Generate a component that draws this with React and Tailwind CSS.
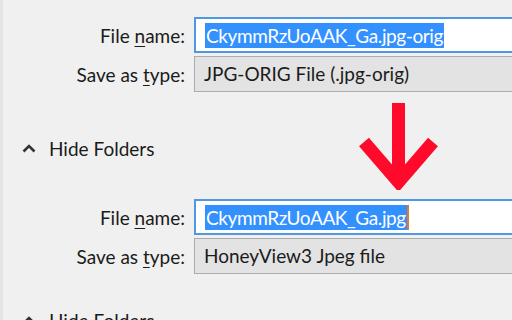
export default function App() {
  const font = { fontFamily: 'Lato, "Open Sans", sans-serif' };
  const Row = ({ label, children, boxClass }) => (
    <div className="flex items-center h-[36px]">
      <div className="w-[186px] shrink-0 text-right pr-[1px] text-[19px] text-[#1b1b1b] leading-none">
        {label}
      </div>
      <div className={"ml-[8px] flex-1 h-full flex items-center pl-[9px] " + boxClass}>{children}</div>
    </div>
  );
  const NameLabel = () => (
    <span>File <span className="underline underline-offset-[3px] decoration-1">n</span>ame:</span>
  );
  const TypeLabel = () => (
    <span>Save as <span className="underline underline-offset-[3px] decoration-1">t</span>ype:</span>
  );
  const Selected = ({ text }) => (
    <span className="bg-[#3390ff] text-white text-[19px] leading-[25px] px-[1px] tracking-[-0.4px]">{text}</span>
  );
  const HideFolders = () => (
    <div className="flex items-center h-[30px] pl-[22px] gap-[13px]">
      <svg width="14" height="9" viewBox="0 0 14 9">
        <path d="M1.5 7.5 L7 2 L12.5 7.5" fill="none" stroke="#333" strokeWidth="2.6" />
      </svg>
      <span className="text-[19px] text-[#1b1b1b] leading-none">Hide Folders</span>
    </div>
  );
  return (
    <div className="relative w-[512px] h-[320px] overflow-hidden bg-[#f0f0f0] border-l-[3px] border-[#e4e4e4]" style={font}>
      <div className="pt-[17px] -ml-[3px]">
        <Row label={<NameLabel />} boxClass="bg-white border-2 border-r-0 border-[#4f98e3]">
          <Selected text="CkymmRzUoAAK_Ga.jpg-orig" />
        </Row>
        <div className="h-[3px]" />
        <Row label={<TypeLabel />} boxClass="bg-[#e3e3e3] border border-r-0 border-[#acacac]">
          <span className="text-[19px] text-[#1b1b1b]">JPG-ORIG File (.jpg-orig)</span>
        </Row>
        <div className="h-[41px]" />
        <HideFolders />
        <div className="h-[36px]" />
        <Row label={<NameLabel />} boxClass="bg-white border-2 border-r-0 border-[#4f98e3]">
          <Selected text="CkymmRzUoAAK_Ga.jpg" />
          <span className="w-[2px] h-[25px] bg-[#e07a2a]" />
        </Row>
        <div className="h-[3px]" />
        <Row label={<TypeLabel />} boxClass="bg-[#e3e3e3] border border-r-0 border-[#acacac]">
          <span className="text-[19px] text-[#1b1b1b]">HoneyView3 Jpeg file</span>
        </Row>
        <div className="h-[31px]" />
        <HideFolders />
      </div>
      <svg className="absolute left-[356px] top-[102px]" width="80" height="88" viewBox="0 0 80 88">
        <path d="M39.5 1 V80" stroke="#ff0a2a" strokeWidth="13" fill="none" />
        <path d="M5 40 L39.5 80 L74 40" stroke="#ff0a2a" strokeWidth="13" fill="none" strokeLinejoin="miter" />
      </svg>
    </div>
  );
}
